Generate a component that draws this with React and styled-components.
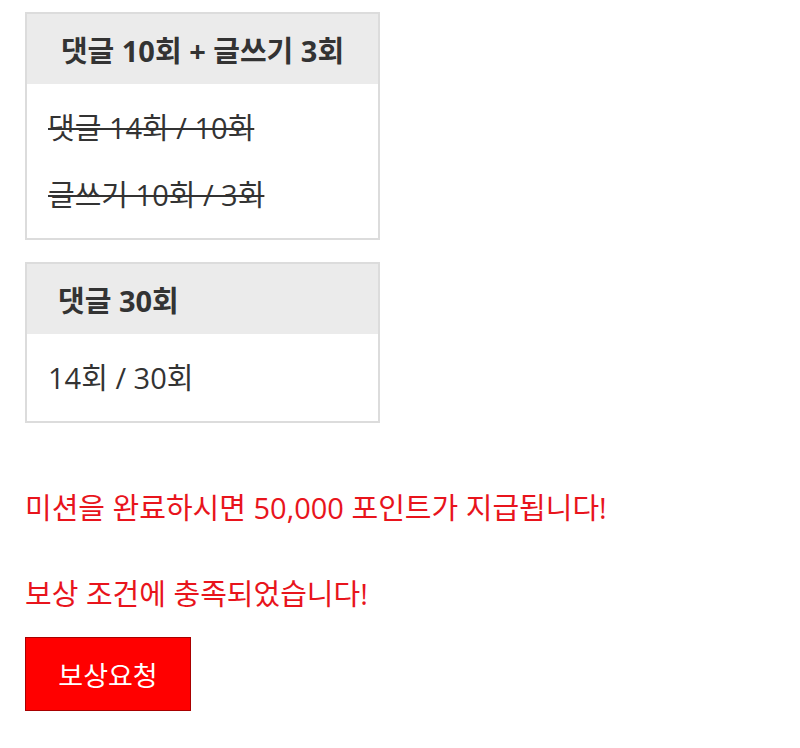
import React from "react";
import styled, { createGlobalStyle } from "styled-components";

const GlobalStyle = createGlobalStyle`
  body {
    margin: 0;
    background: #fff;
    font-family: "Open Sans", "Noto Sans CJK KR", sans-serif;
    color: #333;
  }
`;

const missions = [
  {
    title: "댓글 10회 + 글쓰기 3회",
    align: "center",
    done: true,
    rows: ["댓글 14회 / 10회", "글쓰기 10회 / 3회"],
  },
  {
    title: "댓글 30회",
    align: "left",
    done: false,
    rows: ["14회 / 30회"],
  },
];

const App = () => {
  return (
    <>
      <GlobalStyle />
      <Page>
        <CardList>
          {missions.map((m, i) => (
            <Card key={i}>
              <CardHeader $align={m.align}>{m.title}</CardHeader>
              <CardBody>
                {m.rows.map((r, j) => (
                  <Row key={j} $done={m.done}>
                    {r}
                  </Row>
                ))}
              </CardBody>
            </Card>
          ))}
        </CardList>
        <Notice $top={65}>미션을 완료하시면 50,000 포인트가 지급됩니다!</Notice>
        <Notice $top={46}>보상 조건에 충족되었습니다!</Notice>
        <RewardButton>보상요청</RewardButton>
      </Page>
    </>
  );
};

const Page = styled.div`
  padding: 12px 25px;
`;

const CardList = styled.div`
  display: flex;
  flex-direction: column;
  gap: 22px;
`;

const Card = styled.div`
  width: 355px;
  box-sizing: border-box;
  border: 2px solid #dcdcdc;
  background: #fff;
`;

const CardHeader = styled.div`
  height: 70px;
  display: flex;
  align-items: center;
  justify-content: ${(p) => (p.$align === "center" ? "center" : "flex-start")};
  padding: 0 31px;
  background: #ebebeb;
  font-size: 29px;
  font-weight: 700;
  color: #333;
`;

const CardBody = styled.div`
  padding: 10px 21px 10px;
`;

const Row = styled.div`
  font-size: 29px;
  line-height: 67px;
  color: #333;
  text-decoration: ${(p) => (p.$done ? "line-through" : "none")};
  text-decoration-thickness: 2px;
`;

const Notice = styled.p`
  margin: ${(p) => p.$top}px 0 0;
  font-size: 29px;
  line-height: 40px;
  color: #e8141c;
`;

const RewardButton = styled.button`
  display: block;
  margin-top: 23px;
  width: 166px;
  height: 74px;
  background: #ff0000;
  border: 1px solid #a80000;
  color: #fff;
  font-family: "Open Sans", "Noto Sans CJK KR", sans-serif;
  font-size: 27px;
  cursor: pointer;
`;

export default App;
